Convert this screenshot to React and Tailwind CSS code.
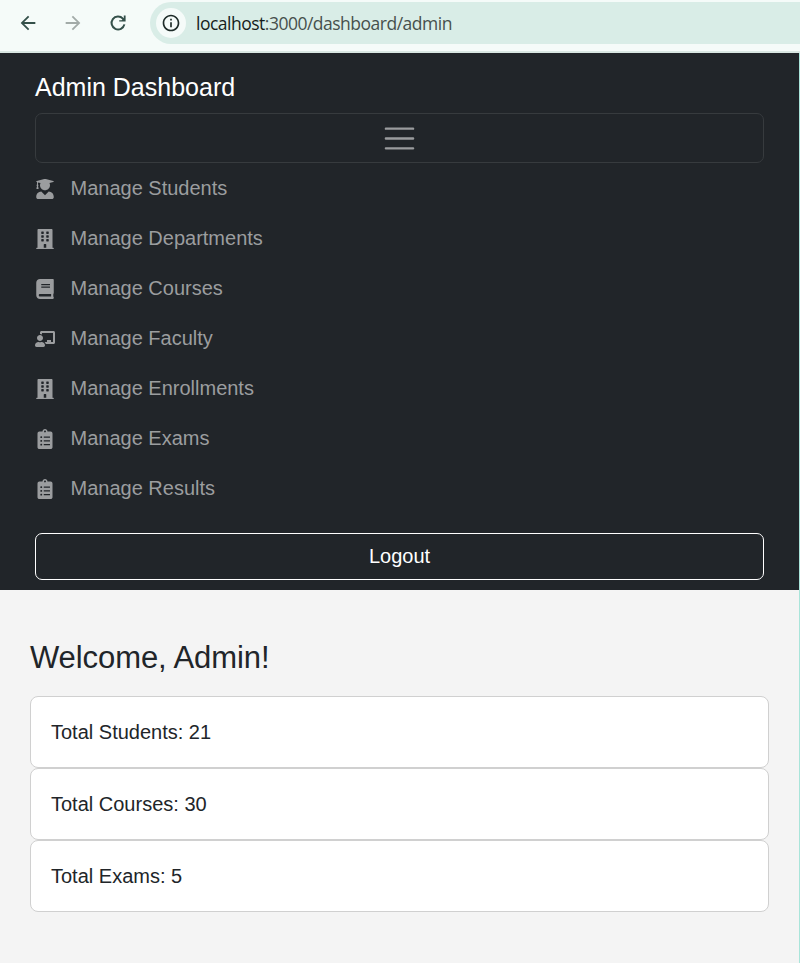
import React from "react";
import {
  FaUserGraduate,
  FaBuilding,
  FaBook,
  FaChalkboardTeacher,
  FaClipboardList,
} from "react-icons/fa";
import { MdArrowBack, MdArrowForward, MdInfoOutline } from "react-icons/md";

const links = [
  { label: "Manage Students", Icon: FaUserGraduate },
  { label: "Manage Departments", Icon: FaBuilding },
  { label: "Manage Courses", Icon: FaBook },
  { label: "Manage Faculty", Icon: FaChalkboardTeacher },
  { label: "Manage Enrollments", Icon: FaBuilding },
  { label: "Manage Exams", Icon: FaClipboardList },
  { label: "Manage Results", Icon: FaClipboardList },
];

const stats = ["Total Students: 21", "Total Courses: 30", "Total Exams: 5"];

function ReloadIcon() {
  return (
    <svg className="ml-[23px] size-[22px]" viewBox="0 0 22 22" fill="none">
      <path d="M17.4 12.4A6.5 6.5 0 1 1 15.9 6.6L17.3 8" stroke="currentColor" strokeWidth="2" />
      <path d="M18.6 3.4V9.6H12.2V8.2H14.6L16.8 6V3.4Z" fill="currentColor" />
    </svg>
  );
}

function BrowserBar() {
  return (
    <header className="flex h-[53px] items-start border-b-2 border-[#d9e7e2] bg-[#f5fbf9] pt-[2px] pl-[16.5px]">
      <div className="flex h-[41px] items-center text-[22px] text-[#34504a]">
        <MdArrowBack />
        <MdArrowForward className="ml-[23px] text-[#a2aba8]" />
        <ReloadIcon />
      </div>
      <div className="ml-[21.5px] flex h-[42px] flex-1 items-center rounded-l-full bg-[#d9ede7] pl-[6px]">
        <span className="flex size-[30px] items-center justify-center rounded-full bg-[#f5fbf9] text-[20px] text-[#1d2b28]">
          <MdInfoOutline />
        </span>
        <span className="ml-[10px] font-['Open_Sans',sans-serif] text-[17.5px] leading-6 tracking-[-0.5px] whitespace-nowrap text-[#47504d]">
          <span className="text-[#161d1b]">localhost</span>:3000/dashboard/admin
        </span>
      </div>
    </header>
  );
}

function Navbar() {
  return (
    <nav className="flex h-[537px] flex-col bg-[#212529] pt-[15px] pr-[35px] pb-[10px] pl-[35px]">
      <div className="h-[45px] text-[25px] leading-[38px] text-white">Admin Dashboard</div>
      <button className="flex h-[50px] shrink-0 items-center justify-center rounded-[7px] border border-[#373b3e]">
        <svg className="size-[37px]" viewBox="0 0 30 30" fill="none">
          <path
            d="M4 7h22M4 15h22M4 23h22"
            stroke="rgba(255,255,255,0.55)"
            strokeLinecap="round"
            strokeMiterlimit="10"
            strokeWidth="2"
          />
        </svg>
      </button>
      <ul>
        {links.map(({ label, Icon }) => (
          <li key={label} className="flex h-[50px] items-center gap-[15.5px] text-[20px] text-[#9b9d9f]">
            <Icon className="mt-[2px] size-5" />
            <span>{label}</span>
          </li>
        ))}
      </ul>
      <button className="mt-auto h-[47px] rounded-[7px] border border-white pb-[2px] text-[20px] text-white">
        Logout
      </button>
    </nav>
  );
}

export default function App() {
  return (
    <div className="flex h-[963px] w-[800px] flex-col overflow-hidden bg-[#f4f4f4] font-['Liberation_Sans',Arial,sans-serif] text-[#212529]">
      <BrowserBar />
      <div className="flex-1 border-r border-[#a9e5da]">
        <Navbar />
        <main className="px-[30px] pt-[49px]">
          <h2 className="h-[57px] text-[31px] leading-[38px] tracking-[-0.08px]">Welcome, Admin!</h2>
          {stats.map((text) => (
            <div
              key={text}
              className="flex h-[72px] items-center rounded-[8px] border border-[#d0d0d0] bg-white pl-5 text-[20px]"
            >
              {text}
            </div>
          ))}
        </main>
      </div>
    </div>
  );
}
